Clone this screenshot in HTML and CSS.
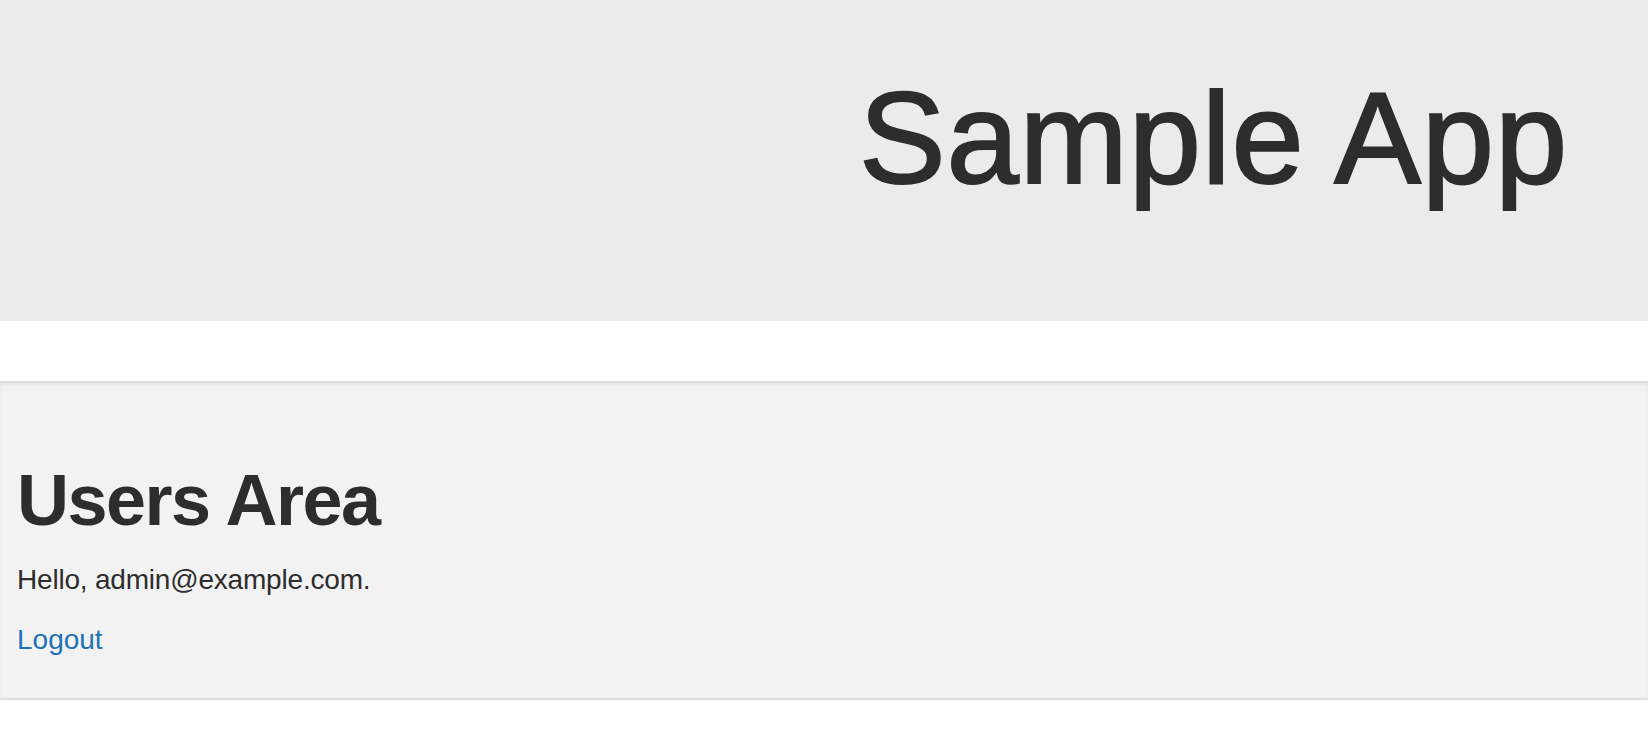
FILE: index.html
```html
<!DOCTYPE html>
<html lang="en">
<head>
    <meta charset="UTF-8">
    <meta name="viewport" content="width=device-width, initial-scale=1.0">
    <title>Sample App</title>
    <link rel="stylesheet" href="styles.css">
</head>
<body>
    <div class="jumbotron">
        <h1>Sample App</h1>
    </div>

    <div class="well">
        <h1>Users Area</h1>
        <p>Hello, admin@example.com.</p>
        <a href="#">Logout</a>
    </div>
</body>
</html>
```

FILE: styles.css
```css
body {
    margin: 0;
    font-family: "Liberation Sans", Arial, sans-serif;
    font-size: 28px;
    line-height: 40px;
    color: #2d2d2d;
    background: #fff;
}
.jumbotron {
    background: #ebebeb;
    padding: 67px 80px 111px;
    margin-bottom: 60px;
    text-align: right;
}
.jumbotron h1 {
    margin: 0;
    font-size: 130px;
    line-height: 1.1;
    font-weight: normal;
    letter-spacing: 0.8px;
    -webkit-text-stroke: 2px #2d2d2d;
}
.well {
    background: #f2f2f2;
    border-top: 2px solid #dcdcdc;
    border-bottom: 2px solid #dcdcdc;
    box-shadow: inset 0 2px 3px rgba(0, 0, 0, 0.05);
    padding: 38px 17px;
}
.well h1 {
    margin: 40px 0 20px;
    font-size: 72px;
    line-height: 1.1;
    font-weight: bold;
    letter-spacing: -1.5px;
}
.well p {
    margin: 0 0 20px;
    letter-spacing: -0.2px;
}
.well a {
    color: #2271b3;
    text-decoration: none;
}
```
